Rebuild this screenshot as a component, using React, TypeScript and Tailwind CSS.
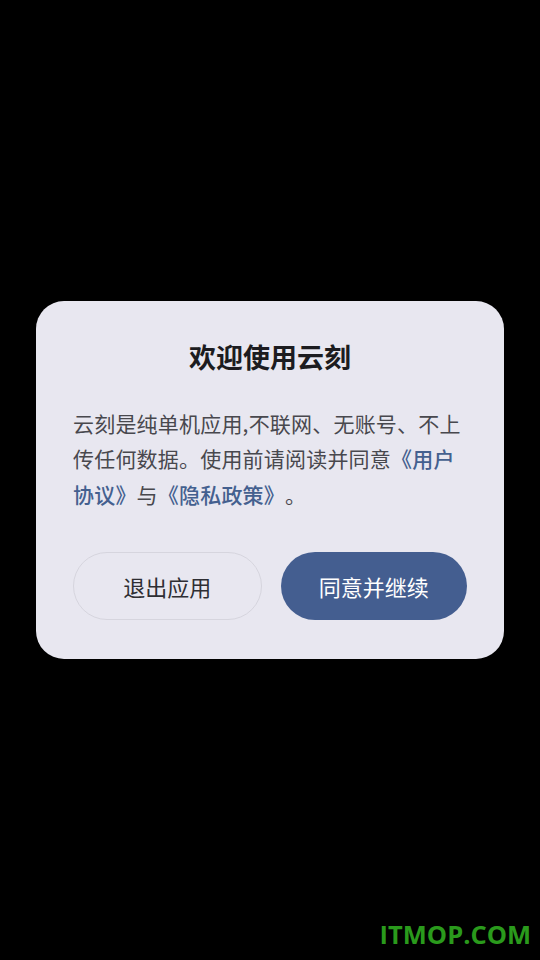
export default function App() {
  return (
    <div
      className="relative flex min-h-screen w-full items-center justify-center bg-black [text-spacing-trim:space-all]"
      style={{ fontFamily: '"Noto Sans CJK SC", "Noto Sans", sans-serif' }}
    >
      <div className="w-[468px] rounded-[28px] bg-[#e8e7f0] px-[37px] pt-[37px] pb-[39px]">
        <h1 className="text-center text-[27px] font-bold leading-[38px] text-[#1c1c20]">
          欢迎使用云刻
        </h1>
        <p className="mt-[30px] text-[21px] leading-[35.5px] tracking-[0.2px] text-[#48484e]">
          云刻是纯单机应用,不联网、无账号、不上传任何数据。使用前请阅读并同意
          <span className="font-medium text-[#44608f]">《用户协议》</span>与
          <span className="font-medium text-[#44608f]">《隐私政策》</span>。
        </p>
        <div className="mt-[40px] flex gap-[19px]">
          <button
            type="button"
            className="h-[68px] flex-1 rounded-full border border-[#d6d5de] text-[22px] text-[#2e2e33]"
          >
            退出应用
          </button>
          <button
            type="button"
            className="h-[68px] flex-1 rounded-full bg-[#445e90] text-[22px] text-white"
          >
            同意并继续
          </button>
        </div>
      </div>
      <div
        className="absolute right-[9px] bottom-[7px] text-[25.5px] font-bold text-[#2a9a1c]"
        style={{ fontFamily: '"Open Sans", "Liberation Sans", sans-serif' }}
      >
        ITMOP.COM
      </div>
    </div>
  )
}
